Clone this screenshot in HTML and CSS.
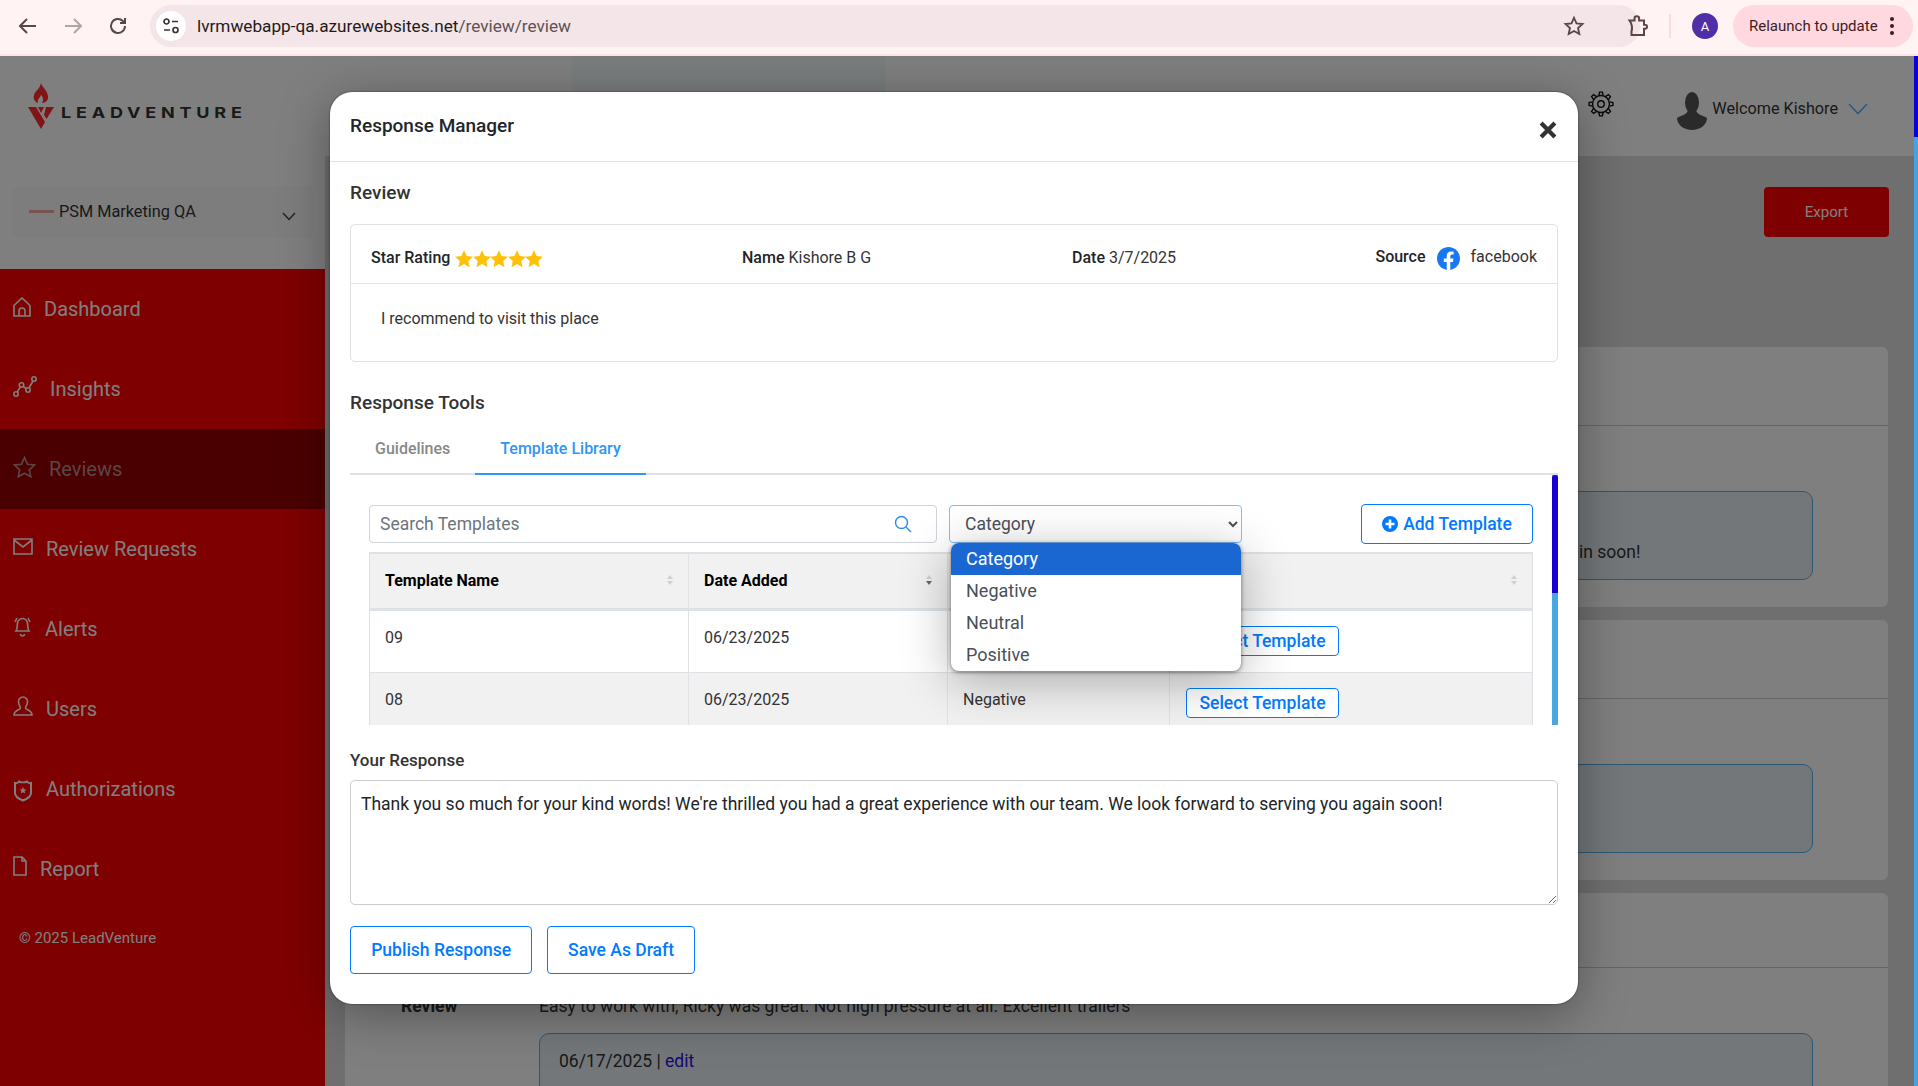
FILE: index.html
```html
<!DOCTYPE html>
<html lang="en">
<head>
<meta charset="utf-8">
<title>Response Manager</title>
<link rel="stylesheet" href="styles.css">
</head>
<body>
<svg class="defs" width="0" height="0" aria-hidden="true">
  <symbol id="star" viewBox="0 0 24 24"><path d="M12 1.500l3.200 6.900 7.500.9-5.600 5.100 1.500 7.400L12 18.100l-6.600 3.700 1.500-7.400L1.300 9.300l7.500-.9z"/></symbol>
</svg>
<header class="browser">
  <svg class="tb-icon" width="24" height="24" viewBox="0 0 24 24"><path d="M20 12H5M11 5l-7 7 7 7"/></svg>
  <svg class="tb-icon dim" width="24" height="24" viewBox="0 0 24 24"><path d="M4 12h15M13 5l7 7-7 7"/></svg>
  <svg class="tb-icon" width="24" height="24" viewBox="0 0 24 24"><path d="M19 12a7 7 0 1 1-2.200-5.100L19 9M19 4v5h-5"/></svg>
  <div class="omnibox">
    <span class="chip"><svg width="18" height="18" viewBox="0 0 18 18"><circle cx="4.500" cy="4.500" r="2.500"/><path d="M10 4.500h6M2 13h6"/><circle cx="13.500" cy="13" r="2.500"/></svg></span>
    <span class="url">lvrmwebapp-qa.azurewebsites.net<span class="url-path">/review/review</span></span>
    <svg class="tb-icon omni-star" width="22" height="22" viewBox="0 0 24 24"><path d="M12 3l2.700 6.100 6.600.7-4.900 4.400 1.400 6.500L12 17.400l-5.800 3.300 1.400-6.500-4.900-4.400 6.600-.7z"/></svg>
  </div>
  <svg class="tb-icon puzzle" width="24" height="24" viewBox="0 0 24 24"><path d="M4.500 6.500H9.500V4.500a2.300 2.300 0 0 1 4.600 0V6.500H19v4.300h1a2 2 0 0 1 0 4h-1V21H6.500v-3.500a13 13 0 0 0-2-11z"/></svg>
  <span class="tb-divider"></span>
  <span class="avatar">A</span>
  <div class="relaunch"><span>Relaunch to update</span><span class="dots"><i></i><i></i><i></i></span></div>
</header>

<div class="app">
  <aside class="sidebar">
    <div class="brand">
      <svg class="flame" width="26" height="47" viewBox="0 0 26 47"><path d="M13 0c1 4 6 7 7 13 .5 4-2 7-6 7 2-3 1-6-1-8-1 3-4 4-3 8-3-1-5-4-4-8 1-4 6-6 7-12z"/><path d="M0 24h8l9 15-4 7z"/><path d="M26 24h-8l-2 8 2.500 4z"/><path d="M10 24h6l-3 6z"/></svg>
      <span class="wordmark">LEADVENTURE</span>
    </div>
    <div class="account">
      <span class="account-mark"></span>
      <span class="account-name">PSM Marketing QA</span>
      <svg class="account-chev" width="14" height="9" viewBox="0 0 14 9"><path d="M1 1l6 6.500L13 1"/></svg>
    </div>
    <nav class="nav">
      <a class="nav-item"><svg width="18" height="20" viewBox="0 0 18 20"><path d="M1 8.500L9 1l8 7.500V19H1zM6 19v-5a3 3 0 0 1 6 0v5"/></svg>Dashboard</a>
      <a class="nav-item"><svg width="24" height="22" viewBox="0 0 24 22"><circle cx="3" cy="18" r="2.200"/><circle cx="8.500" cy="9" r="2.200"/><circle cx="15" cy="14" r="2.200"/><circle cx="21" cy="3" r="2.200"/><path d="M4.200 16.200L7.300 10.800M10.300 10.300l3 2.500M16 12l4-7"/></svg>Insights</a>
      <a class="nav-item active"><svg width="23" height="22" viewBox="0 0 23 22"><path d="M11.500 1.500l3 6.700 7 .8-5.200 4.800 1.500 7-6.300-3.600-6.300 3.600 1.500-7L1.500 9l7-.8z"/></svg>Reviews</a>
      <a class="nav-item"><svg class="nudge" width="20" height="17" viewBox="0 0 20 17"><path d="M1 1h18v15H1zM1 2l9 7 9-7"/></svg>Review Requests</a>
      <a class="nav-item"><svg class="nudge" width="19" height="21" viewBox="0 0 19 21"><path d="M3 15c1.500-2 1-5 1.500-7.500a5 5 0 0 1 10 0c.5 2.500 0 5.500 1.500 7.500zM7.500 18a2 2 0 0 0 4 0M2 6l2-4M17 6l-2-4"/></svg>Alerts</a>
      <a class="nav-item"><svg class="nudge" width="20" height="20" viewBox="0 0 20 20"><path d="M10 1a4.500 4.500 0 0 1 4.500 5c0 3-2 4.500-2 6 0 2 6.500 2 6.500 7H1c0-5 6.500-5 6.500-7 0-1.500-2-3-2-6A4.500 4.500 0 0 1 10 1z"/></svg>Users</a>
      <a class="nav-item"><svg class="shield" width="20" height="22" viewBox="0 0 20 22"><path d="M2 3c2 .5 3 0 4-1.500 2 1 6 1 8 0 1 1.500 2 2 4 1.500v10c0 4-4 6-8 7.500-4-1.500-8-3.500-8-7.500z"/><path class="fill" d="M10 7l1 2.300 2.500.2-1.900 1.600.6 2.400-2.200-1.300-2.200 1.300.6-2.400-1.900-1.600 2.500-.2z"/></svg>Authorizations</a>
      <a class="nav-item"><svg class="nudge" width="14" height="20" viewBox="0 0 14 20"><path d="M1 1h8l4 4v14H1zM9 1v4h4"/></svg>Report</a>
      <p class="copyright">© 2025 LeadVenture</p>
    </nav>
  </aside>

  <main class="main">
    <div class="topbar">
      <span class="top-strip"></span>
      <svg class="gear" width="26" height="26" viewBox="0 0 24 24"><circle cx="12" cy="12" r="7.800"/><circle cx="12" cy="12" r="3"/><path d="M10 4.400L10.700 1h2.600l.7 3.400"/><path transform="rotate(45 12 12)" d="M10 4.400L10.700 1h2.600l.7 3.400"/><path transform="rotate(90 12 12)" d="M10 4.400L10.700 1h2.600l.7 3.400"/><path transform="rotate(135 12 12)" d="M10 4.400L10.700 1h2.600l.7 3.400"/><path transform="rotate(180 12 12)" d="M10 4.400L10.700 1h2.600l.7 3.400"/><path transform="rotate(225 12 12)" d="M10 4.400L10.700 1h2.600l.7 3.400"/><path transform="rotate(270 12 12)" d="M10 4.400L10.700 1h2.600l.7 3.400"/><path transform="rotate(315 12 12)" d="M10 4.400L10.700 1h2.600l.7 3.400"/></svg>
      <svg class="person" width="30" height="38" viewBox="0 0 30 38"><ellipse cx="15" cy="10.500" rx="7" ry="10.500"/><path d="M0 26c4-3 11-3 11-9h8c0 6 7 6 11 9 0 7-7 12-15 12S0 33 0 26z"/></svg>
      <span class="welcome">Welcome Kishore</span>
      <svg class="welcome-chev" width="20" height="12" viewBox="0 0 20 12"><path d="M1 1l9 9.500L19 1"/></svg>
    </div>
    <div class="page">
      <div class="page-actions"><button class="export">Export</button></div>
      <section class="review-card">
        <div class="review-head"></div>
        <div class="review-row"></div>
        <div class="reply"><p class="reply-date">06/17/2025 | <a class="edit">edit</a></p><p class="reply-text">Thank you so much for your kind words! We're thrilled you had a great experience with our team. We look forward to serving you again soon!</p></div>
      </section>
      <section class="review-card">
        <div class="review-head"></div>
        <div class="review-row"></div>
        <div class="reply"></div>
      </section>
      <section class="review-card">
        <div class="review-head"></div>
        <div class="review-row"><strong class="review-label">Review</strong><span>Easy to work with, Ricky was great. Not high pressure at all. Excellent trailers</span></div>
        <div class="reply"><p class="reply-date">06/17/2025 | <a class="edit">edit</a></p><p class="reply-text">Thank you</p></div>
      </section>
    </div>
  </main>

  <div class="overlay"></div>
  <div class="page-scroll"><span class="page-thumb"></span></div>

  <div class="modal">
    <div class="modal-head">
      <h2 class="modal-title">Response Manager</h2>
      <svg class="close" width="18" height="18" viewBox="0 0 17 17"><path d="M2 2l13 13M15 2L2 15"/></svg>
    </div>
    <div class="modal-body">
      <h3 class="section-title">Review</h3>
      <div class="review-box">
        <div class="box-head">
          <div class="meta meta-rating"><b>Star Rating</b>
            <span class="stars"><svg width="20" height="20"><use href="#star"/></svg><svg width="20" height="20"><use href="#star"/></svg><svg width="20" height="20"><use href="#star"/></svg><svg width="20" height="20"><use href="#star"/></svg><svg width="20" height="20"><use href="#star"/></svg></span>
          </div>
          <div class="meta meta-name"><b>Name</b> Kishore B G</div>
          <div class="meta meta-date"><b>Date</b> 3/7/2025</div>
          <div class="meta meta-source"><b>Source</b>
            <svg class="fb" width="23" height="23" viewBox="0 0 24 24"><path d="M24 12.073c0-6.627-5.373-12-12-12s-12 5.373-12 12c0 5.990 4.388 10.954 10.125 11.854v-8.385H7.078v-3.470h3.047V9.430c0-3.007 1.792-4.669 4.533-4.669 1.312 0 2.686.235 2.686.235v2.953H15.830c-1.491 0-1.956.925-1.956 1.874v2.250h3.328l-.532 3.470h-2.796v8.385C19.612 23.027 24 18.062 24 12.073z"/></svg>
            <span>facebook</span>
          </div>
        </div>
        <p class="box-body">I recommend to visit this place</p>
      </div>

      <h3 class="section-title tools-title">Response Tools</h3>
      <div class="tabs">
        <a class="tab">Guidelines</a>
        <a class="tab tab-active">Template Library</a>
      </div>
      <div class="pane">
        <div class="pane-tools">
          <label class="search">
            <input class="search-input" type="text" placeholder="Search Templates">
            <svg class="search-icon" width="18" height="18" viewBox="0 0 18 18"><circle cx="7.500" cy="7.500" r="6"/><path d="M12 12l5 5"/></svg>
          </label>
          <select class="category"><option>Category</option></select>
          <button class="btn btn-add"><svg width="16" height="16" viewBox="0 0 16 16"><path d="M8 0a8 8 0 1 0 0 16A8 8 0 0 0 8 0zm1.300 3.500v3.200h3.200v2.600H9.300v3.200H6.700V9.300H3.500V6.700h3.200V3.500z"/></svg>Add Template</button>
        </div>
        <table class="templates">
          <colgroup><col class="c1"><col class="c2"><col class="c3"><col class="c4"></colgroup>
          <thead>
            <tr>
              <th><span class="th-in">Template Name<span class="sort"><i></i><i></i></span></span></th>
              <th><span class="th-in">Date Added<span class="sort sort-on"><i></i><i></i></span></span></th>
              <th></th>
              <th><span class="th-in th-end"><span class="sort"><i></i><i></i></span></span></th>
            </tr>
          </thead>
          <tbody>
            <tr><td>09</td><td>06/23/2025</td><td></td><td><button class="btn btn-select">Select Template</button></td></tr>
            <tr class="alt"><td>08</td><td>06/23/2025</td><td class="cat">Negative</td><td><button class="btn btn-select">Select Template</button></td></tr>
          </tbody>
        </table>
        <ul class="popup">
          <li class="popup-on">Category</li>
          <li>Negative</li>
          <li>Neutral</li>
          <li>Positive</li>
        </ul>
        <div class="pane-scroll"><span class="pane-thumb"></span></div>
      </div>

      <label class="response-label" for="resp">Your Response</label>
      <textarea id="resp" class="response">Thank you so much for your kind words! We're thrilled you had a great experience with our team. We look forward to serving you again soon!</textarea>
      <div class="actions">
        <button class="btn btn-main">Publish Response</button>
        <button class="btn btn-main">Save As Draft</button>
      </div>
    </div>
  </div>
</div>
</body>
</html>
```
FILE: styles.css
```css
* { box-sizing: border-box; }
html, body { margin: 0; height: 100%; }
body { width: 1918px; height: 1086px; overflow: hidden; font-family: Roboto, "Liberation Sans", sans-serif; color: #212529; display: flex; flex-direction: column; }
.defs { position: absolute; }
p, h2, h3, ul { margin: 0; padding: 0; }

/* browser chrome */
.browser { height: 56px; flex: none; background: #fff4f3; border-bottom: 2px solid #fbe4e2; display: flex; align-items: center; padding: 0 6px 2px 16px; }
.tb-icon { fill: none; stroke: #5b4547; stroke-width: 2; flex: none; margin-right: 21px; }
.tb-icon.dim { stroke: #b3a3a4; }
.omnibox { width: 1490px; height: 42px; margin-left: -1px; border-radius: 21px; background: #f3e5e8; display: flex; align-items: center; padding-left: 6px; flex: none; }
.chip { width: 30px; height: 30px; border-radius: 50%; background: #fff; display: flex; align-items: center; justify-content: center; }
.chip svg { fill: none; stroke: #3f3033; stroke-width: 1.700; }
.url { margin-left: 11px; font-size: 17.200px; color: #1f1b1c; flex: 1; }
.url-path { color: #5f5254; }
.tb-icon.omni-star { margin-right: 55px; }
.omnibox + .puzzle { margin: 0 0 0 -15px; }
.tb-divider { width: 2px; height: 24px; background: #fbdcdc; margin: 0 21px 0 20px; flex: none; }
.avatar { width: 26px; height: 26px; border-radius: 50%; background: #4f2ea8; color: #fff; font-size: 13px; display: flex; align-items: center; justify-content: center; flex: none; }
.relaunch { margin-left: 15px; width: 180px; height: 42px; border-radius: 21px; background: #ffd9df; display: flex; align-items: center; padding-left: 16px; font-size: 15px; color: #3d1c24; flex: none; }
.dots { margin-left: 12px; display: flex; flex-direction: column; gap: 3px; }
.dots i { width: 4px; height: 4px; border-radius: 50%; background: #3d1c24; }

/* application */
.app { position: relative; flex: 1; min-height: 0; display: flex; overflow: hidden; }
.sidebar { width: 325px; flex: none; display: flex; flex-direction: column; background: #fff; }
.brand { height: 131px; flex: none; padding: 27px 0 0 28px; display: flex; align-items: flex-start; }
.flame { fill: #ff2a2a; flex: none; }
.wordmark { margin: 19px 0 0 7px; font-family: Inter, sans-serif; font-weight: 700; font-size: 15px; line-height: 22px; letter-spacing: 4px; color: #333; white-space: nowrap; transform: scaleX(1.200); transform-origin: left center; }
.account { height: 50px; margin: 0 12px 0 13px; flex: none; border: 1px solid #f6f6f6; border-radius: 5px; background: #fbfbfb; display: flex; align-items: center; padding: 0 16px 0 15px; }
.account-mark { width: 25px; height: 3px; background: #f2a5a5; flex: none; margin-top: -2px; }
.account-name { margin: -2px 0 0 5px; font-size: 16.300px; color: #333; flex: 1; }
.account-chev { fill: none; stroke: #444; stroke-width: 1.500; margin-top: 8px; }
.nav { margin-top: 32px; flex: 1; background: #fe0000; display: flex; flex-direction: column; }
.nav-item { height: 80px; flex: none; display: flex; align-items: center; gap: 13px; padding-left: 13px; font-size: 20px; color: #fff; }
.nav-item svg { fill: none; stroke: #fff; stroke-width: 1.600; flex: none; margin-top: -4px; }
.nav-item .shield { margin-top: 4px; stroke-width: 2; }
.nav-item .fill { fill: #fff; stroke: none; }
.nav-item .nudge { margin-top: -6px; }
.nav-item.active { background: #940000; color: #b98a8a; }
.nav-item.active svg { stroke: #b98a8a; }
.copyright { margin: 20px 0 0 19px; font-size: 15px; line-height: 18px; color: #fff; }

.main { flex: 1; min-width: 0; display: flex; flex-direction: column; background: #dedede; }
.topbar { position: relative; height: 100px; flex: none; background: #fff; display: flex; align-items: flex-start; justify-content: flex-end; padding-right: 50px; }
.top-strip { position: absolute; left: 247px; top: 0; width: 314px; height: 60px; background: #f4fafa; }
.gear { fill: none; stroke: #111; stroke-width: 1.300; margin: 35px 63px 0 0; }
.person { fill: #555; margin: 36px 5px 0 0; }
.welcome { margin-top: 43px; font-size: 16.200px; line-height: 20px; color: #333; }
.welcome-chev { fill: none; stroke: #55b4ff; stroke-width: 1.600; margin: 47px 0 0 10px; }
.page { flex: 1; min-height: 0; padding: 31px 30px 0 20px; display: flex; flex-direction: column; gap: 13.500px; overflow: hidden; }
.page-actions { height: 50px; flex: none; margin-bottom: 96.500px; display: flex; justify-content: flex-end; }
.export { width: 125px; height: 50px; margin-right: -1px; border: 0; border-radius: 4px; background: #fe0000; color: #fff; font: 400 15px Roboto, sans-serif; }
.review-card { height: 259.500px; flex: none; background: #fff; border-radius: 6px; }
.review-head { height: 79px; border-bottom: 1px solid #ccc; }
.review-card:last-child .review-head { height: 75px; }
.review-row { height: 65px; padding: 11px 0 0 56px; display: flex; align-items: center; font-size: 17.500px; color: #333; }
.review-label { width: 138px; flex: none; }
.reply { margin: 0 75px 0 194px; height: 89px; padding: 14px 17px 0 19px; background: #e7eef2; border: 1px solid #55b0f0; border-radius: 10px; font-size: 17.500px; line-height: 27px; color: #333; white-space: nowrap; }
.reply-text { margin-top: 6px; }
.edit { color: #2a10e0; }
.review-card:last-child .reply { height: 200px; }

.overlay { position: absolute; inset: 0; background: rgba(0, 0, 0, .5); }
.page-scroll { position: absolute; top: 0; right: 0; bottom: 0; width: 4px; background: #47a3e0; }
.page-thumb { display: block; height: 81px; background: #0a00d8; }

/* modal */
.modal { position: absolute; left: 330px; top: 36px; width: 1248px; height: 912px; background: #fff; border-radius: 22px; box-shadow: 0 0 2px rgba(0, 0, 0, .6), 0 10px 50px rgba(0, 0, 0, .35); }
.modal-head { height: 70px; border-bottom: 1px solid #dfe2e6; display: flex; justify-content: space-between; align-items: flex-start; padding: 23px 20px 0; }
.modal-title { font-size: 19px; font-weight: 500; line-height: 22px; color: #212529; }
.close { fill: none; stroke: #333; stroke-width: 4; margin: 6px 1px 0 0; }
.modal-body { padding: 20px 20px 0; }
.section-title { font-size: 19px; font-weight: 500; line-height: 22px; color: #333; }
.review-box { margin-top: 20px; height: 138px; border: 1px solid #dfe2e6; border-radius: 5px; }
.box-head { height: 59px; border-bottom: 1px solid #dfe2e6; display: flex; align-items: center; padding: 7px 20px 0; font-size: 16px; color: #333; }
.meta b { font-weight: 500; color: #212529; }
.meta-rating { width: 371px; display: flex; align-items: center; gap: 4px; }
.stars { display: flex; width: 88px; margin-top: 2px; }
.stars svg { fill: #ffc107; margin-right: -2.500px; flex: none; }
.meta-name { width: 330px; }
.meta-date { flex: 1; }
.meta-source { display: flex; align-items: center; margin-top: -2px; }
.fb { fill: #1877f2; margin: 3px 11px 0 11px; }
.box-body { padding: 24px 30px 0; font-size: 16px; line-height: 22px; color: #333; }
.tools-title { margin-top: 30px; }
.tabs { height: 61px; border-bottom: 2px solid #dee2e6; display: flex; align-items: flex-end; }
.tab { padding: 1px 25px 14px; height: 37px; line-height: 20px; margin-bottom: -2px; font-size: 16px; font-weight: 500; color: #888; border-bottom: 2px solid transparent; }
.tab-active { color: #2f95f5; border-bottom-color: #2f95f5; }
.pane { position: relative; height: 250px; overflow: hidden; padding: 29px 25px 0 19px; }
.pane-tools { display: flex; align-items: center; height: 40px; }
.search { position: relative; display: block; width: 568px; height: 38px; flex: none; }
.search-input { width: 100%; height: 38px; border: 1px solid #ced4da; border-radius: 4px; padding: 0 10px 1px; font: 400 17.500px Roboto, sans-serif; color: #495057; outline: 0; }
.search-input::placeholder { color: #6c757d; opacity: 1; }
.search-icon { position: absolute; right: 25px; top: 10px; fill: none; stroke: #2f8ff0; stroke-width: 1.500; }
.category { margin-left: 12px; width: 292.500px; height: 38px; flex: none; border: 1px solid #80bdff; border-radius: 4px; background: #fff; padding: 0 11px 1px; font: 400 17.500px Roboto, sans-serif; color: #495057; outline: 0; }
.btn { border: 1px solid #007bff; border-radius: 4px; background: #fff; color: #007bff; font: 500 17.500px Roboto, sans-serif; padding: 0; }
.btn-add { margin-left: auto; width: 172px; height: 40px; display: flex; align-items: center; justify-content: center; gap: 5px; }
.btn-add svg { fill: #007bff; }
.templates { margin-top: 8px; width: 1164px; table-layout: fixed; border-collapse: separate; border-spacing: 0; }
.c1 { width: 320px; } .c2 { width: 259px; } .c3 { width: 222px; } .c4 { width: 363px; }
.templates th { height: 59px; background: #f1f1f1; border-top: 2px solid #dee2e6; border-bottom: 3px solid #dee2e6; border-right: 1px solid #dee2e6; padding: 0 15px 2px; text-align: left; font-size: 16px; font-weight: 700; color: #000; }
.templates td { height: 62px; border-bottom: 1px solid #dee2e6; border-right: 1px solid #dee2e6; padding: 16px 15px 0; vertical-align: top; font-size: 16px; line-height: 22px; color: #333; }
.templates th:first-child, .templates td:first-child { border-left: 1px solid #dee2e6; }
.templates .alt td { background: #f1f1f1; }
.th-in { display: flex; align-items: center; justify-content: space-between; }
.th-end { justify-content: flex-end; }
.sort { display: flex; flex-direction: column; gap: 2px; }
.sort i { width: 0; height: 0; border-left: 3px solid transparent; border-right: 3px solid transparent; }
.sort i:first-child { border-bottom: 4px solid #d0d0d0; }
.sort i:last-child { border-top: 4px solid #d0d0d0; }
.sort-on i:last-child { border-top-color: #666; }
.btn-select { width: 153px; height: 30px; margin: -1px 0 0 1px; line-height: 28px; display: block; }
.popup { position: absolute; left: 601px; top: 68px; width: 290px; list-style: none; background: #fff; border-radius: 8px; overflow: hidden; box-shadow: 0 1px 4px rgba(0, 0, 0, .5), 0 10px 50px rgba(0, 0, 0, .3); font-size: 18px; color: #495057; z-index: 2; }
.popup li { height: 32px; line-height: 32px; padding-left: 15px; }
.popup .popup-on { background: #1a67d2; color: #fff; }
.pane-scroll { position: absolute; top: 0; right: 0; bottom: 0; width: 6px; background: #47a7e0; }
.pane-thumb { display: block; height: 118px; background: #1800d0; border-radius: 3px 3px 0 0; }
.response-label { display: block; margin-top: 25px; font-size: 17px; font-weight: 500; line-height: 20px; color: #333; }
.response { display: block; margin-top: 10px; width: 100%; height: 125px; border: 1px solid #ccc; border-radius: 5px; padding: 10px 10px 8px; font: 400 17.500px/27px Roboto, sans-serif; color: #212529; outline: 0; }
.actions { margin-top: 21px; display: flex; gap: 14.500px; }
.btn-main { height: 48px; padding: 0 20.200px; }
```
